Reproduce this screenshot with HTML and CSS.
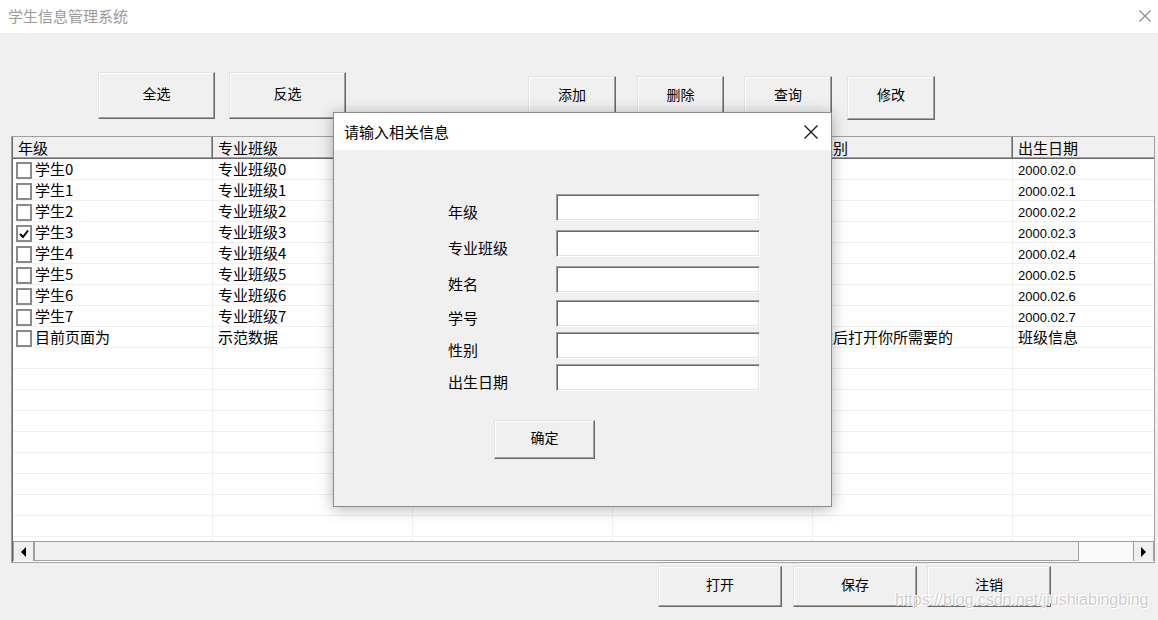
FILE: index.html
```html
<!DOCTYPE html>
<html lang="zh-CN">
<head>
    <meta charset="UTF-8">
    <title>学生信息管理系统</title>
    <link rel="stylesheet" href="styles.css">
</head>
<body>
    <header class="titlebar">
        <span class="app-title">学生信息管理系统</span>
        <svg class="win-close" width="12" height="12" viewBox="0 0 12 12">
            <path d="M0.5 0.5 L11.5 11.5 M11.5 0.5 L0.5 11.5" stroke="#8a8a8a" stroke-width="1.1" fill="none"/>
        </svg>
    </header>

    <!-- top row of buttons -->
    <div class="toolbar">
        <button class="btn btn-select">全选</button>
        <button class="btn btn-select btn-invert">反选</button>
        <div class="edit-group">
            <button class="btn btn-edit">添加</button>
            <button class="btn btn-edit btn-del">删除</button>
            <button class="btn btn-edit btn-find">查询</button>
            <button class="btn btn-edit btn-mod">修改</button>
        </div>
    </div>

    <!-- student grid -->
    <div class="grid">
        <div class="grid-body">
            <table class="students">
                <tr>
                    <th>年级</th>
                    <th>专业班级</th>
                    <th></th>
                    <th></th>
                    <th>性别</th>
                    <th>出生日期</th>
                </tr>
                <tr>
                    <td class="first"><span class="check"></span>学生0</td>
                    <td>专业班级0</td><td></td><td></td><td></td><td class="date">2000.02.0</td>
                </tr>
                <tr>
                    <td class="first"><span class="check"></span>学生1</td>
                    <td>专业班级1</td><td></td><td></td><td></td><td class="date">2000.02.1</td>
                </tr>
                <tr>
                    <td class="first"><span class="check"></span>学生2</td>
                    <td>专业班级2</td><td></td><td></td><td></td><td class="date">2000.02.2</td>
                </tr>
                <tr>
                    <td class="first"><span class="check checked"><svg width="12" height="12" viewBox="0 0 12 12"><path d="M2 6 L5 9 L10 2.5" stroke="#000" stroke-width="2" fill="none"/></svg></span>学生3</td>
                    <td>专业班级3</td><td></td><td></td><td></td><td class="date">2000.02.3</td>
                </tr>
                <tr>
                    <td class="first"><span class="check"></span>学生4</td>
                    <td>专业班级4</td><td></td><td></td><td></td><td class="date">2000.02.4</td>
                </tr>
                <tr>
                    <td class="first"><span class="check"></span>学生5</td>
                    <td>专业班级5</td><td></td><td></td><td></td><td class="date">2000.02.5</td>
                </tr>
                <tr>
                    <td class="first"><span class="check"></span>学生6</td>
                    <td>专业班级6</td><td></td><td></td><td></td><td class="date">2000.02.6</td>
                </tr>
                <tr>
                    <td class="first"><span class="check"></span>学生7</td>
                    <td>专业班级7</td><td></td><td></td><td></td><td class="date">2000.02.7</td>
                </tr>
                <tr>
                    <td class="first"><span class="check"></span>目前页面为</td>
                    <td>示范数据</td><td></td><td></td><td>然后打开你所需要的</td><td>班级信息</td>
                </tr>
                <tr><td></td><td></td><td></td><td></td><td></td><td></td></tr>
                <tr><td></td><td></td><td></td><td></td><td></td><td></td></tr>
                <tr><td></td><td></td><td></td><td></td><td></td><td></td></tr>
                <tr><td></td><td></td><td></td><td></td><td></td><td></td></tr>
                <tr><td></td><td></td><td></td><td></td><td></td><td></td></tr>
                <tr><td></td><td></td><td></td><td></td><td></td><td></td></tr>
                <tr><td></td><td></td><td></td><td></td><td></td><td></td></tr>
                <tr><td></td><td></td><td></td><td></td><td></td><td></td></tr>
                <tr><td></td><td></td><td></td><td></td><td></td><td></td></tr>
                <tr><td></td><td></td><td></td><td></td><td></td><td></td></tr>
            </table>
        </div>
        <div class="hscroll">
            <div class="arrow"><span class="tri-left"></span></div>
            <div class="thumb"></div>
            <div class="track"></div>
            <div class="arrow"><span class="tri-right"></span></div>
        </div>
    </div>

    <!-- bottom buttons -->
    <div class="footer-bar">
        <button class="btn btn-foot">打开</button>
        <button class="btn btn-foot btn-save">保存</button>
        <button class="btn btn-foot btn-quit">注销</button>
    </div>

    <!-- input dialog -->
    <div class="dialog">
        <div class="dialog-title">
            <span>请输入相关信息</span>
            <svg width="14" height="14" viewBox="0 0 14 14">
                <path d="M0.5 0.5 L13.5 13.5 M13.5 0.5 L0.5 13.5" stroke="#111" stroke-width="1.2" fill="none"/>
            </svg>
        </div>
        <div class="dialog-body">
            <div class="form">
                <label>年级</label><input type="text">
                <label>专业班级</label><input type="text">
                <label>姓名</label><input type="text">
                <label>学号</label><input type="text">
                <label>性别</label><input type="text">
                <label>出生日期</label><input type="text">
            </div>
            <button class="btn btn-ok">确定</button>
        </div>
    </div>

    <div class="watermark">https://blog.csdn.net/jiushiabingbing</div>
</body>
</html>
```

FILE: styles.css
```css
* {
    box-sizing: border-box;
}

body {
    margin: 0;
    width: 1158px;
    height: 620px;
    overflow: hidden;
    position: relative;
    background-color: #f0f0f0;
    font-family: "Noto Sans CJK SC", "Liberation Sans", sans-serif;
    font-size: 14px;
    color: #000;
}

/* window title */
.titlebar {
    height: 33px;
    background-color: #fff;
    display: flex;
    align-items: center;
    justify-content: space-between;
    padding: 0 7px 2px 8px;
}

.app-title {
    font-size: 15px;
    color: #9a9a9a;
}

/* classic 3d buttons */
.btn {
    font-family: "Noto Sans CJK SC", sans-serif;
    font-size: 14px;
    line-height: 18px;
    color: #000;
    background-color: #f0f0f0;
    border: 1px solid;
    border-color: #e3e3e3 #696969 #696969 #e3e3e3;
    box-shadow: inset -1px -1px 0 #a0a0a0, inset 1px 1px 0 #fff;
    padding: 0 0 5px;
}

.toolbar {
    height: 87px;
    padding: 39px 0 0 98px;
    display: flex;
    align-items: flex-start;
}

.btn-select {
    width: 117px;
    height: 47px;
}

.btn-invert {
    margin-left: 14px;
}

.edit-group {
    display: flex;
    margin: 4px 0 0 182px;
}

.btn-edit {
    width: 88px;
    height: 44px;
    padding-bottom: 9px;
}

.btn-del {
    width: 87px;
    margin-left: 21px;
}

.btn-find {
    margin-left: 20px;
}

.btn-mod {
    margin-left: 15px;
}

/* grid */
.grid {
    margin: 16px 0 0 11px;
    width: 1144px;
    height: 427px;
    border: 1px solid #a0a0a0;
    box-shadow: inset 1px 1px 0 #696969;
    background-color: #fff;
    display: flex;
    flex-direction: column;
}

.grid-body {
    height: 404px;
    overflow: hidden;
    margin-left: 1px;
}

.students {
    table-layout: fixed;
    width: 1200px;
    border-collapse: separate;
    border-spacing: 0;
}

.students th {
    width: 200px;
    height: 22px;
    padding: 0 0 1px 5px;
    text-align: left;
    font-weight: normal;
    font-size: 15px;
    line-height: 19px;
    background-color: #f0f0f0;
    border-right: 1px solid #696969;
    border-bottom: 1px solid #696969;
    box-shadow: inset -1px -1px 0 #a0a0a0;
}

.students td {
    height: 21px;
    padding: 0 0 0 5px;
    font-size: 15px;
    line-height: 20px;
    white-space: nowrap;
    overflow: hidden;
    border-right: 1px solid #f0f0f0;
    border-bottom: 1px solid #f0f0f0;
}

.students td.first {
    padding-left: 3px;
}

.students td.date {
    font-family: "Liberation Sans", sans-serif;
    font-size: 13px;
    line-height: 17px;
    padding-top: 3px;
}

.check {
    display: inline-block;
    width: 16px;
    height: 17px;
    border: 2px solid #8a8a8a;
    background-color: #fff;
    vertical-align: -4px;
    margin-right: 3px;
    position: relative;
}

.check svg {
    position: absolute;
    left: 0;
    top: 1px;
}

/* horizontal scrollbar */
.hscroll {
    height: 20px;
    display: flex;
    background-color: #f0f0f0;
    border-top: 1px solid #a0a0a0;
    margin-left: 1px;
}

.arrow {
    width: 21px;
    border-right: 1px solid #a0a0a0;
    border-left: 1px solid #a0a0a0;
    display: flex;
    align-items: center;
    justify-content: center;
    background-color: #f0f0f0;
}

.tri-left {
    width: 0;
    height: 0;
    border-top: 5px solid transparent;
    border-bottom: 5px solid transparent;
    border-right: 5px solid #000;
}

.tri-right {
    width: 0;
    height: 0;
    border-top: 5px solid transparent;
    border-bottom: 5px solid transparent;
    border-left: 5px solid #000;
}

.thumb {
    width: 1045px;
    border: 1px solid #a0a0a0;
    border-top: none;
    background-color: #f0f0f0;
}

.track {
    flex: 1;
    background-image: repeating-conic-gradient(#f4f4f4 0 25%, #fff 0 50%);
    background-size: 2px 2px;
}

/* bottom row */
.footer-bar {
    display: flex;
    padding: 3px 0 0 658px;
}

.btn-foot {
    width: 124px;
    height: 41px;
}

.btn-save {
    margin-left: 11px;
}

.btn-quit {
    margin-left: 10px;
}

/* dialog floats over the grid */
.dialog {
    position: absolute;
    left: 333px;
    top: 112px;
    width: 499px;
    height: 395px;
    border: 1px solid #8c8c8c;
    background-color: #f0f0f0;
    box-shadow: 0 2px 14px rgba(0, 0, 0, 0.3);
}

.dialog-title {
    height: 37px;
    background-color: #fff;
    display: flex;
    align-items: center;
    justify-content: space-between;
    padding: 0 13px 0 10px;
    font-size: 15px;
}

.dialog-body {
    padding: 44px 0 0 114px;
}

.form {
    display: grid;
    grid-template-columns: 108px 204px;
    grid-template-rows: 36px 36px 34px 32px 32px 27px;
}

.form label {
    font-size: 15px;
    line-height: 20px;
    padding-top: 8px;
}

.form input {
    width: 204px;
    height: 27px;
    margin: 0;
    background-color: #fff;
    border: 1px solid;
    border-color: #a0a0a0 #fff #fff #a0a0a0;
    box-shadow: inset 1px 1px 0 #696969, inset -1px -1px 0 #e3e3e3;
}

.btn-ok {
    display: block;
    width: 101px;
    height: 39px;
    margin: 29px 0 0 46px;
}

.watermark {
    position: absolute;
    left: 895px;
    top: 591px;
    font-family: "Liberation Sans", sans-serif;
    font-size: 16px;
    color: #cfcfcf;
    text-shadow: 0 0 1px #fff, 1px 1px 0 #fff, -1px -1px 0 #fff;
}
```
